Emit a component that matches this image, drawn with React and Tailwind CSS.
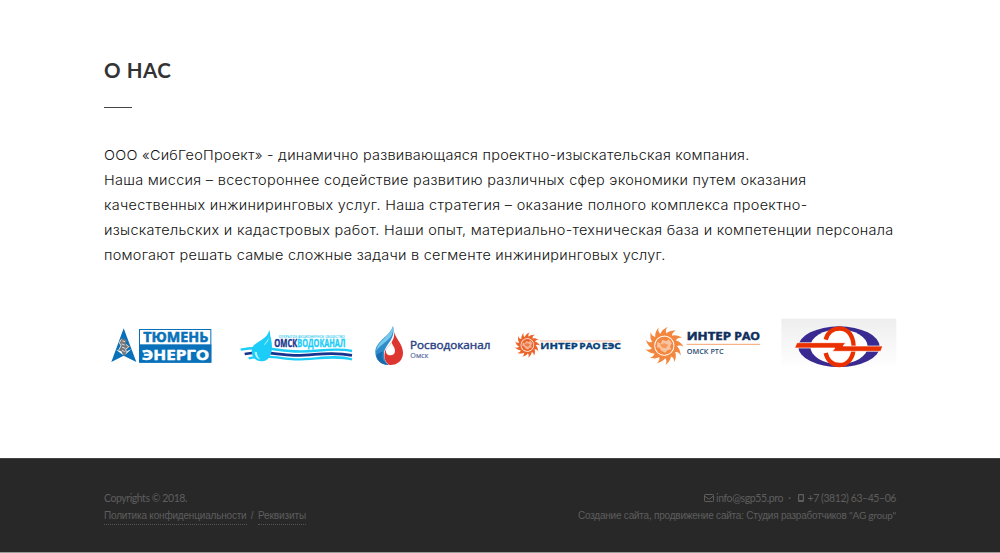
import React, { useLayoutEffect, useRef, useState } from "react";

// Spreads a single line of text over a given width by adjusting its tracking.
// `scale` is the horizontal scale that the line's class applies.
function Fit({ width, scale = 1, className = "", children }) {
  const ref = useRef(null);
  const [spacing, setSpacing] = useState(0);
  useLayoutEffect(() => {
    const count = ref.current.textContent.length;
    const natural = ref.current.getBoundingClientRect().width / scale - spacing * count;
    setSpacing((width / scale - natural) / count);
  }, [width, scale]);
  return (
    <span ref={ref} className={"inline-block whitespace-nowrap " + className} style={{ letterSpacing: spacing + "px" }}>
      {children}
    </span>
  );
}

const lines = [
  [645.5, "ООО «СибГеоПроект» - динамично развивающаяся проектно-изыскательская компания."],
  [702.5, "Наша миссия – всестороннее содействие развитию различных сфер экономики путем оказания"],
  [703.5, "качественных инжиниринговых услуг. Наша стратегия – оказание полного комплекса проектно-"],
  [789.5, "изыскательских и кадастровых работ. Наши опыт, материально-техническая база и компетенции персонала"],
  [561.5, "помогают решать самые сложные задачи в сегменте инжиниринговых услуг."],
];

function Logo({ viewBox, label, children }) {
  return (
    <svg viewBox={viewBox} role="img" aria-label={label} className="block h-[57px] w-full overflow-visible font-['Open_Sans',sans-serif]">
      {children}
    </svg>
  );
}

function T({ x, y, w, size, children, ...rest }) {
  return (
    <text x={x} y={y} textLength={w} lengthAdjust="spacingAndGlyphs" fontSize={size} {...rest}>
      {children}
    </text>
  );
}

function Sun({ cx, cy, r, color }) {
  const rays = Array.from({ length: 13 }, (_, i) => i * (360 / 13));
  return (
    <g transform={`translate(${cx} ${cy}) scale(${r / 38})`}>
      {rays.map((a) => (
        <path key={a} transform={`rotate(${a})`} d="M-8 -22C-7 -28 -3 -33 7 -38C2 -32 2 -28 6 -22Z" fill={color} />
      ))}
      <circle r="22.500" fill="none" stroke={color} strokeWidth="5" />
      <circle r="18.500" fill={color} />
      <circle r="19.500" fill="none" stroke="#fff" strokeWidth="1.2" opacity=".6" />
      <path d="M-14 -8L-7 -4L-4 -12L4 -9L9 -13L15 -5L11 2L14 7L6 9L2 14L-6 10L-10 4L-15 3Z" fill="#fff" opacity=".5" />
      <path d="M-9 -2L0 -5L8 -2L3 5L-4 4Z" fill={color} opacity=".7" />
    </g>
  );
}

function Logos() {
  return (
    <div className="grid grid-cols-6 gap-5">
      <Logo viewBox="12 9 346 171" label="Тюмень Энерго">
        <path d="M71 40L109 141L71 122L34 141Z" fill="#0871b9" />
        <path d="M64 70L80 75L77 88L91 94L79 105L82 113L72 124L66 110L56 107L62 94L57 84Z" fill="#777" />
        <path d="M64 73L58 83L63 92L56 105M78 88L86 95L77 103L79 112M67 78L75 80M65 87L74 90M66 97L76 100M66 106L74 110" fill="none" stroke="#eee" strokeWidth="2.5" />
        <path d="M48 104L64 109L70 121ZM83 107L94 103L75 119Z" fill="#fff" />
        <rect x="118.500" y="43.500" width="214" height="98" fill="#fff" stroke="#0871b9" strokeWidth="3" />
        <rect x="118" y="88" width="216" height="55" fill="#0871b9" />
        <T x="130" y="81" w="195" size="41" fontWeight="700" fill="#0871b9" stroke="#0871b9" strokeWidth="1.500">ТЮМЕНЬ</T>
        <T x="126" y="136" w="202" size="43" fontWeight="700" fill="#fff" stroke="#fff" strokeWidth="1.500">ЭНЕРГО</T>
      </Logo>

      <Logo viewBox="28 9 346 171" label="Омскводоканал">
        <g fill="none">
          <path d="M33 104C92 93 120 103 181 108C247 116 304 94 367 108" stroke="#1ccdf8" strokeWidth="7" />
          <path d="M45 117C103 105 140 120 193 121C251 123 296 107 367 121" stroke="#17338d" strokeWidth="8" />
          <path d="M57 130C108 118 148 130 194 133C251 135 313 118 367 133" stroke="#1ccdf8" strokeWidth="7" />
        </g>
        <path d="M119 45C122 54 121 62 124 72C132 104 124 139 96 139C74 139 62 120 67 101C73 79 112 77 119 45Z" fill="#1ccdf8" />
        <path d="M117 66C116 76 107 82 103 89C100 95 111 85 116 76ZM75 110C75 121 81 131 92 133C84 127 82 119 82 112Z" fill="#b8f4ff" />
        <T x="147" y="68" w="198" size="8" fontWeight="600" fill="#27c8ef">ОТКРЫТОЕ АКЦИОНЕРНОЕ ОБЩЕСТВО</T>
        <T x="134" y="97" w="69" size="29" fontWeight="700" fill="#17338d" stroke="#17338d">ОМСК</T>
        <T x="203" y="97" w="144" size="29" fontWeight="700" fill="#1ccdf8" stroke="#1ccdf8">ВОДОКАНАЛ</T>
      </Logo>

      <Logo viewBox="29 9 346 171" label="Росводоканал Омск">
        <path d="M83 33C74 64 30 78 30 112C30 135 47 150 69 150C58 137 56 128 56 116C56 91 93 74 83 33Z" fill="#2f8cc9" />
        <path d="M83 33C74 64 34 81 33 108C48 82 89 76 83 33Z" fill="#75c9ed" />
        <path d="M33 120C35 138 51 151 71 149C54 142 48 128 53 110C45 112 38 115 33 120Z" fill="#196bae" />
        <path d="M86 50C94 75 113 88 113 114C113 136 96 151 73 150C61 144 55 130 58 114C61 94 91 82 86 50Z" fill="#dd3631" />
        <path d="M78 80C81 91 89 96 89 107C89 116 83 121 75 121C66 121 61 115 62 106C63 96 76 92 78 80Z" fill="#fff" />
        <T x="134" y="102" w="241" size="34" fontWeight="500" fill="#2c4385" stroke="#2c4385" strokeWidth="1.300">Росводоканал</T>
        <T x="135" y="128" w="54" size="22" fill="#52699e" stroke="#52699e" strokeWidth=".5">Омск</T>
      </Logo>

      <Logo viewBox="15 9 346 171" label="Интер РАО ЕЭС">
        <Sun cx={67} cy={90} r={38} color="#eb642b" />
        <path d="M105 78H347" stroke="#f6bba0" strokeWidth="3" />
        <T x="106" y="103" w="112" size="26" fontWeight="700" fill="#073f78" stroke="#073f78" strokeWidth="1">ИНТЕР</T>
        <T x="223" y="103" w="64" size="26" fontWeight="700" fill="#073f78" stroke="#073f78" strokeWidth="1">РАО</T>
        <T x="290" y="103" w="58" size="26" fontWeight="700" fill="#073f78" stroke="#073f78" strokeWidth="1">ЕЭС</T>
      </Logo>

      <Logo viewBox="31 9 346 171" label="Интер РАО Омск РТС">
        <Sun cx={89} cy={92} r={57} color="#f4873f" />
        <T x="156" y="76" w="133" size="33" fontWeight="700" fill="#102f5c" stroke="#102f5c" strokeWidth="1.500">ИНТЕР</T>
        <T x="299" y="76" w="77" size="33" fontWeight="700" fill="#102f5c" stroke="#102f5c" strokeWidth="1.500">РАО</T>
        <path d="M156 88H376" stroke="#f5a36c" strokeWidth="3" />
        <T x="156" y="118" w="111" size="22" fontWeight="600" fill="#294a72">ОМСК РТС</T>
      </Logo>

      <Logo viewBox="17 18 346 171" label="Эмблема партнёра">
        <defs>
          <linearGradient id="plate" x1="0" y1="0" x2="0" y2="1">
            <stop offset="0" stopColor="#eeeeee" />
            <stop offset="1" stopColor="#ffffff" />
          </linearGradient>
        </defs>
        <rect x="18" y="20" width="345" height="150" fill="url(#plate)" />
        <ellipse cx="191" cy="104" rx="122" ry="61" fill="#392a91" />
        <ellipse cx="191" cy="104" rx="86" ry="52" fill="#fff" />
        <path d="M151 83C158 57 175 50 193 50C219 50 234 72 235 104C235 137 218 159 193 159C171 159 156 145 151 123" fill="none" stroke="#eb3000" strokeWidth="13" />
        <path d="M65 92H211L203 102H322L316 118H171L179 108H58Z" fill="#eb3000" stroke="#fff" strokeWidth="2" />
      </Logo>
    </div>
  );
}

export default function App() {
  return (
    <div className="flex h-[553px] w-full flex-col overflow-hidden bg-white">
      <main className="mx-auto h-[458px] w-[792px]">
        <h1 className="pt-[55px] text-[20.500px] leading-[30px] font-bold text-[#333]">
          <Fit width={67.5} className="font-['Lato',sans-serif]">О НАС</Fit>
        </h1>
        <div className="mt-[21.500px] h-[1.500px] w-7 bg-[#444]" />
        <div className="mt-[35px] flex flex-col items-start font-['Inter',sans-serif] text-[13.500px] leading-[25px] font-light text-[#111]">
          {lines.map(([w, text]) => (
            <Fit key={text} width={w} scale={1.07} className="origin-left scale-x-[1.07]">{text}</Fit>
          ))}
        </div>
        <div className="mt-[50px]">
          <Logos />
        </div>
      </main>

      <footer className="h-[94px] shrink-0 border-t border-[#444] bg-[#282828] font-['Lato',sans-serif] text-[10.500px] leading-[18px] text-[#5e5e5e]">
        <div className="mx-auto flex w-[792px] justify-between pt-[30px]">
          <div>
            <div><Fit width={83}>Copyrights © 2018.</Fit></div>
            <div className="flex font-['Liberation_Sans',sans-serif] text-[10px] leading-[17px]">
              <a className="border-b border-dotted border-[#555]"><Fit width={142.5}>Политика конфиденциальности</Fit></a>
              <span className="w-[11.500px] text-center">/</span>
              <a className="border-b border-dotted border-[#555]"><Fit width={48}>Реквизиты</Fit></a>
            </div>
          </div>
          <div className="flex flex-col items-end">
            <div className="flex items-center">
              <svg viewBox="0 0 10 8" className="mr-0.5 h-2 w-2.5" fill="none" stroke="currentColor">
                <rect x=".5" y=".5" width="9" height="7" rx=".7" />
                <path d="M.7 2L4 4.700Q5 5.500 6 4.700L9.300 2" />
              </svg>
              <Fit width={67}>info@sgp55.pro</Fit>
              <span className="w-[15px] pr-0.5 text-center">·</span>
              <svg viewBox="0 0 6 8" className="mr-[3.500px] h-2 w-1.5" fill="currentColor">
                <path fillRule="evenodd" d="M1 0H5Q6 0 6 1V7Q6 8 5 8H1Q0 8 0 7V1Q0 0 1 0ZM1.200 1.200V6H4.800V1.200Z" />
              </svg>
              <Fit width={88.5}>+7 (3812) 63–45–06</Fit>
            </div>
            <Fit width={318} className="font-['Liberation_Sans',sans-serif] text-[10px] leading-[17px]">
              Создание сайта, продвижение сайта: Студия разработчиков <span className="font-['Lato',sans-serif]">"AG group"</span>
            </Fit>
          </div>
        </div>
      </footer>
      <div className="h-px bg-[#999]" />
    </div>
  );
}
